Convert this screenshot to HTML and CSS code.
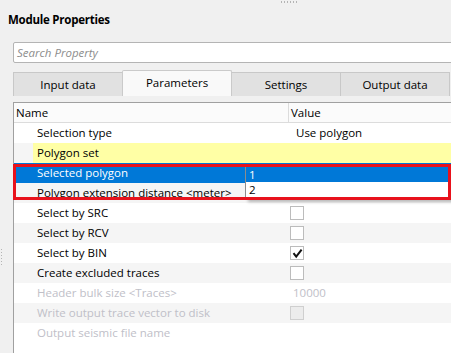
FILE: index.html
```html
<!DOCTYPE html>
<html lang="en">
  <head>
    <meta charset="UTF-8" />
    <title>Module Properties</title>
    <link rel="stylesheet" href="styles.css">
  </head>
  <body>
    <div class="grip-top"></div>
    <h1 class="title">Module Properties</h1>

    <div class="panel">
      <div class="gutter"><div class="grip-side"></div></div>

      <div class="content">
        <div class="search">Search Property</div>

        <nav class="tabs">
          <div class="tab">Input data</div>
          <div class="tab active">Parameters</div>
          <div class="tab">Settings</div>
          <div class="tab">Output data</div>
        </nav>

        <section class="grid">
          <div class="row head">
            <div class="cell-name">Name</div>
            <div class="cell-value">Value</div>
          </div>

          <div class="row">
            <div class="indent"></div>
            <div class="name">Selection type</div>
            <div class="value text">Use polygon</div>
          </div>
          <div class="row alt">
            <div class="indent"></div>
            <div class="name yellow">Polygon set</div>
            <div class="value yellow"></div>
          </div>
          <div class="row selected">
            <div class="indent"></div>
            <div class="name">Selected polygon</div>
            <div class="value"></div>
          </div>
          <div class="row alt">
            <div class="indent"></div>
            <div class="name">Polygon extension distance &lt;meter&gt;</div>
            <div class="value"></div>
          </div>
          <div class="row">
            <div class="indent"></div>
            <div class="name">Select by SRC</div>
            <div class="value"><span class="check"></span></div>
          </div>
          <div class="row alt">
            <div class="indent"></div>
            <div class="name">Select by RCV</div>
            <div class="value"><span class="check"></span></div>
          </div>
          <div class="row">
            <div class="indent"></div>
            <div class="name">Select by BIN</div>
            <div class="value">
              <span class="check">
                <svg width="11" height="11" viewBox="0 0 11 11"><path d="M1.5 5.2 L4.2 8.6 L9.6 1.6" fill="none" stroke="#111" stroke-width="2"/></svg>
              </span>
            </div>
          </div>
          <div class="row alt">
            <div class="indent"></div>
            <div class="name">Create excluded traces</div>
            <div class="value"><span class="check"></span></div>
          </div>
          <div class="row disabled">
            <div class="indent"></div>
            <div class="name">Header bulk size &lt;Traces&gt;</div>
            <div class="value num">10000</div>
          </div>
          <div class="row alt disabled">
            <div class="indent"></div>
            <div class="name">Write output trace vector to disk</div>
            <div class="value"><span class="check off"></span></div>
          </div>
          <div class="row disabled">
            <div class="indent"></div>
            <div class="name">Output seismic file name</div>
            <div class="value"></div>
          </div>

          <!-- open combo list of the selected row -->
          <ul class="dropdown">
            <li class="picked">1</li>
            <li>2</li>
          </ul>
          <!-- annotation box -->
          <div class="mark"></div>
        </section>
      </div>
    </div>
  </body>
</html>
```

FILE: styles.css
```css
:root {
  --bg: #f0f0f0;
  --line: #a0a0a0;
  --alt: #f5f5f5;
  --blue: #0078d7;
  --yellow: #ffffa5;
  --muted: #c0c0c8;
}

* {
  box-sizing: border-box;
}

body {
  margin: 0;
  width: 451px;
  height: 353px;
  overflow: hidden;
  background: var(--bg);
  color: #000;
  font-family: "Open Sans", "Noto Sans", Arial, sans-serif;
  font-size: 11.5px;
}

/* ───────────  grips  ─────────── */
.grip-top {
  margin-left: 281px;
  width: 17px;
  height: 2px;
  margin-top: 1px;
  background: repeating-linear-gradient(to right, #b4b4b4 0 1px, transparent 1px 3px);
}

.grip-side {
  margin: 207px 0 0 1px;
  width: 1px;
  height: 17px;
  background: repeating-linear-gradient(to bottom, #b4b4b4 0 1px, transparent 1px 3px);
}

.title {
  margin: 9px 0 0 8px;
  font-size: 11.5px;
  font-weight: 700;
  letter-spacing: -0.25px;
  line-height: 16px;
}

/* ───────────  layout  ─────────── */
.panel {
  display: flex;
  margin-top: 14px;
}

.gutter {
  flex: 0 0 13px;
}

.content {
  flex: 0 0 445px;
}

.search {
  height: 21px;
  padding-left: 3px;
  line-height: 19px;
  border: 1px solid #b4b4b4;
  border-radius: 2px;
  background: #fff;
  color: #8c8c8c;
  font-style: italic;
}

/* ───────────  tabs  ─────────── */
.tabs {
  display: flex;
  align-items: flex-end;
  height: 26px;
  margin-top: 7px;
}

.tab {
  flex: 0 0 110px;
  height: 24px;
  margin-right: -1px;
  border: 1px solid #c8c8c8;
  border-bottom: none;
  background: #e1e1e1;
  text-align: center;
  line-height: 24px;
}

.tab.active {
  height: 26px;
  line-height: 24px;
  background: #f9f9f9;
  border-color: #cacaca;
  border-radius: 2px 2px 0 0;
  position: relative;
  z-index: 1;
}

/* ───────────  property grid  ─────────── */
.grid {
  position: relative;
  margin-top: 6px;
  height: 260px;
  border-top: 1px solid var(--line);
  border-left: 1px solid var(--line);
  background: #fff;
}

.row {
  display: flex;
  height: 20px;
  line-height: 20px;
  white-space: nowrap;
}

.row.head {
  height: 20px;
  line-height: 19px;
  border-bottom: 1px solid #dcdcdc;
  background: #fbfbfb;
}

.cell-name {
  flex: 0 0 275px;
  padding-left: 2px;
  border-right: 1px solid #dcdcdc;
}

.cell-value {
  padding-left: 2px;
}

.indent {
  flex: 0 0 19px;
}

.name {
  flex: 0 0 256px;
  padding-left: 4px;
  overflow: hidden;
}

.value {
  flex: 1;
  display: flex;
  align-items: center;
}

.value.text {
  padding-left: 7px;
}

.value.num {
  padding-left: 4px;
}

.row.alt {
  background: var(--alt);
}

.yellow {
  background: var(--yellow);
}

.row.selected {
  background: var(--blue);
  color: #fff;
}

.row.disabled {
  color: var(--muted);
}

.check {
  display: grid;
  place-items: center;
  width: 14px;
  height: 14px;
  margin-left: 1px;
  border: 1px solid #bcbcbc;
  background: #fff;
}

.check.off {
  background: #ececec;
  border-color: #cfcfcf;
}

/* ───────────  overlays  ─────────── */
.dropdown {
  position: absolute;
  left: 231px;
  top: 62px;
  width: 206px;
  height: 34px;
  margin: 0;
  padding: 2px 0 0;
  list-style: none;
  background: #fff;
  border-left: 1px solid #8c8c8c;
  box-shadow: 3px 3px 3px rgba(0, 0, 0, 0.25);
}

.dropdown li {
  height: 15px;
  padding-left: 3px;
  line-height: 15px;
}

.dropdown li.picked {
  background: var(--blue);
  color: #fff;
}

.mark {
  position: absolute;
  left: -1px;
  top: 61px;
  width: 438px;
  height: 36px;
  border: 3px solid #e8121c;
}
```
